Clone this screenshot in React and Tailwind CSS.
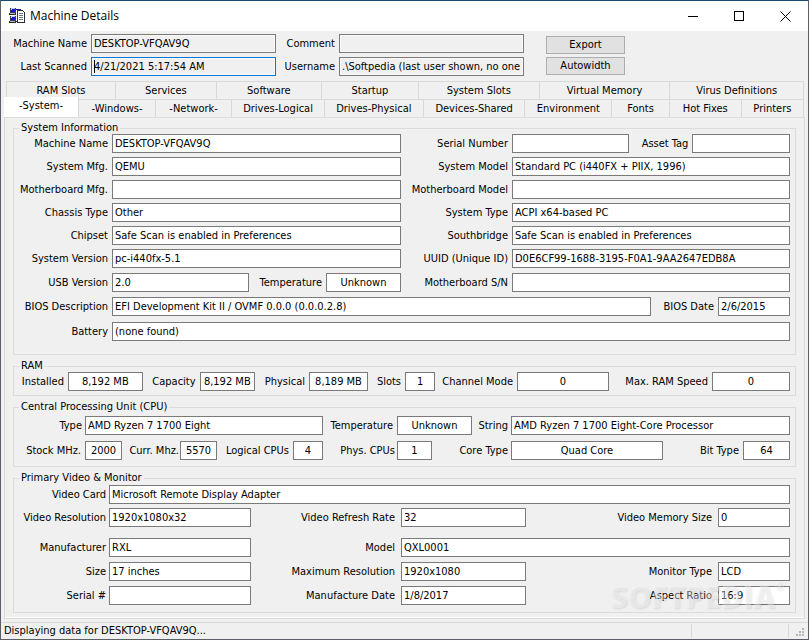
import React, { useId } from 'react';

const upperTabs = [
  ['RAM Slots', 'flex-109'],
  ['Services', 'flex-101'],
  ['Software', 'flex-105'],
  ['Startup', 'flex-97'],
  ['System Slots', 'flex-121'],
  ['Virtual Memory', 'flex-131'],
  ['Virus Definitions', 'flex-134'],
];

const lowerTabs = [
  ['-Windows-', 'flex-77'],
  ['-Network-', 'flex-76'],
  ['Drives-Logical', 'flex-93'],
  ['Drives-Physical', 'flex-99'],
  ['Devices-Shared', 'flex-102'],
  ['Environment', 'flex-87'],
  ['Fonts', 'flex-57'],
  ['Hot Fixes', 'flex-72'],
  ['Printers', 'flex-62'],
];

function Field({ label, value = '', labelWidth, width = 'flex-1', gap = 'pr-1', center = false }) {
  const id = useId();
  return (
    <>
      <label htmlFor={id} className={`shrink-0 text-right whitespace-nowrap ${gap} ${labelWidth}`}>
        {label}
      </label>
      <input
        id={id}
        readOnly
        defaultValue={value}
        className={`h-[19px] min-w-0 border border-[#7a7a7a] bg-white px-0.5 outline-none ${width} ${center ? 'text-center' : ''}`}
      />
    </>
  );
}

function Row({ children, className = '' }) {
  return <div className={`flex h-[19px] min-w-0 items-center ${className}`}>{children}</div>;
}

function Group({ title, className = '', children }) {
  return (
    <fieldset className={`min-w-0 border border-[#dcdcdc] pr-[5px] ${className}`}>
      <legend className="ml-[5px] h-3.5 px-0.5 leading-[14px]">{title}</legend>
      {children}
    </fieldset>
  );
}

function HeaderField({ label, value = '', labelWidth, focused = false }) {
  const id = useId();
  return (
    <div className="flex h-[19px] items-center">
      <label htmlFor={id} className={`shrink-0 pr-1 text-right whitespace-nowrap ${labelWidth}`}>
        {label}
      </label>
      <div className="relative w-[185px]">
        <input
          id={id}
          readOnly
          defaultValue={value}
          className={`block h-[19px] w-full border bg-[#f0f0f0] px-0.5 shadow-[inset_0_0_0_1px_#fafafa] outline-none ${focused ? 'border-[#0078d7]' : 'border-[#7a7a7a]'}`}
        />
        {focused && <span className="absolute top-[3px] left-[3px] h-[13px] w-px bg-black" />}
      </div>
    </div>
  );
}

function AppIcon() {
  return (
    <svg width="17" height="16" viewBox="0 0 17 16" shapeRendering="crispEdges" aria-hidden="true">
      <path d="M6 1h6v1H6zM6 13h3v1H6z" fill="#20208c" />
      <path d="M1 0h6v5H1zM1 8h6v5H1z" fill="#3c3c50" />
      <path d="M2 0h4v4H2zM2 8h4v4H2z" fill="#c4c8dc" />
      <path d="M2 1h4v3H2zM2 9h4v3H2z" fill="#1018d8" />
      <path d="M2 1h1v1H2zM2 9h1v1H2z" fill="#a8d8ff" />
      <path d="M0 5h7v2H0zM0 13h7v2H0z" fill="#2c2c2c" />
      <path d="M1 5h5v1H1zM1 13h5v1H1z" fill="#b8b8b8" />
      <path d="M8 2h6v1h1v1h1v11H8z" fill="#2c2c3c" />
      <path d="M9 3h5v1h1v10H9z" fill="#fff" />
      <path d="M10 5h4v1h-4zM10 7h4v1h-4zM10 9h4v1h-4zM10 11h4v1h-4z" fill="#707078" />
    </svg>
  );
}

function TitleBar() {
  return (
    <header className="flex h-[30px] items-center bg-white pl-2">
      <AppIcon />
      <h1 className="ml-1 font-['Open_Sans','Noto_Sans',sans-serif] text-xs">Machine Details</h1>
      <div className="ml-auto flex h-full">
        <button type="button" aria-label="Minimize" className="flex w-[46px] items-center justify-center">
          <svg width="10" height="11" shapeRendering="crispEdges">
            <path d="M0 5h10v1H0z" fill="#000" />
          </svg>
        </button>
        <button type="button" aria-label="Maximize" className="flex w-[46px] items-center justify-center">
          <svg width="10" height="10" shapeRendering="crispEdges">
            <path d="M.5 .5h9v9h-9z" stroke="#000" fill="none" />
          </svg>
        </button>
        <button type="button" aria-label="Close" className="flex w-[46px] items-center justify-center">
          <svg width="11" height="11">
            <path d="M.5 .5l10 10M10.500 .5l-10 10" stroke="#000" fill="none" />
          </svg>
        </button>
      </div>
    </header>
  );
}

function Tab({ name, size }) {
  return (
    <button
      type="button"
      role="tab"
      aria-selected="false"
      className={`h-[18px] min-w-0 border-t border-r border-[#d9d9d9] whitespace-nowrap ${size}`}
    >
      {name}
    </button>
  );
}

export default function App() {
  return (
    <div className="flex min-h-screen flex-col border border-[#5c6066] border-t-[#1b486d] bg-[#f0f0f0] font-['DejaVu_Sans_Condensed','Noto_Sans',sans-serif] text-[11px] leading-[14px] text-black">
      <TitleBar />

      <section className="flex items-start pt-[3px]">
        <div className="flex flex-col gap-1">
          <HeaderField label="Machine Name" value="DESKTOP-VFQAV9Q" labelWidth="w-[90px]" />
          <HeaderField label="Last Scanned" value="4/21/2021 5:17:54 AM" labelWidth="w-[90px]" focused />
        </div>
        <div className="flex flex-col gap-1">
          <HeaderField label="Comment" labelWidth="w-[63px]" />
          <HeaderField label="Username" value=".\Softpedia (last user shown, no one is logged in)" labelWidth="w-[63px]" />
        </div>
        <div className="mt-0.5 ml-[22px] flex flex-col gap-[3px]">
          <button type="button" className="h-[18px] w-[79px] border border-[#adadad] bg-[#e1e1e1]">Export</button>
          <button type="button" className="h-[18px] w-[79px] border border-[#adadad] bg-[#e1e1e1]">Autowidth</button>
        </div>
      </section>

      <nav role="tablist" className="mt-[5px] px-[3px]">
        <div className="mr-px ml-0.5 flex border-l border-[#d9d9d9]">
          {upperTabs.map(([name, size]) => (
            <Tab key={name} name={name} size={size} />
          ))}
        </div>
        <div className="mr-px flex items-end">
          <button
            type="button"
            role="tab"
            aria-selected="true"
            className="-mt-0.5 h-5 w-[75px] shrink-0 border-r border-[#d9d9d9] bg-white pb-0.5"
          >
            -System-
          </button>
          {lowerTabs.map(([name, size]) => (
            <Tab key={name} name={name} size={size} />
          ))}
        </div>
      </nav>

      <main className="mx-[3px] flex flex-col gap-1 border border-[#dcdcdc] px-2 pt-[3px] pb-[5px] shadow-[inset_0_-1px_0_#fff]">
        <Group title="System Information" className="pb-[13px]">
          <div className="-mt-px grid grid-cols-[minmax(0,387fr)_minmax(0,389fr)] gap-y-1">
            <Row><Field label="Machine Name" value="DESKTOP-VFQAV9Q" labelWidth="w-[98px]" /></Row>
            <Row>
              <Field label="Serial Number" labelWidth="w-[111px]" width="flex-118" />
              <Field label="Asset Tag" labelWidth="w-[63px]" width="flex-97" />
            </Row>
            <Row><Field label="System Mfg." value="QEMU" labelWidth="w-[98px]" /></Row>
            <Row><Field label="System Model" value="Standard PC (i440FX + PIIX, 1996)" labelWidth="w-[111px]" /></Row>
            <Row><Field label="Motherboard Mfg." labelWidth="w-[98px]" /></Row>
            <Row><Field label="Motherboard Model" labelWidth="w-[111px]" /></Row>
            <Row><Field label="Chassis Type" value="Other" labelWidth="w-[98px]" /></Row>
            <Row><Field label="System Type" value="ACPI x64-based PC" labelWidth="w-[111px]" /></Row>
            <Row><Field label="Chipset" value="Safe Scan is enabled in Preferences" labelWidth="w-[98px]" /></Row>
            <Row><Field label="Southbridge" value="Safe Scan is enabled in Preferences" labelWidth="w-[111px]" /></Row>
            <Row><Field label="System Version" value="pc-i440fx-5.1" labelWidth="w-[98px]" /></Row>
            <Row><Field label="UUID (Unique ID)" value="D0E6CF99-1688-3195-F0A1-9AA2647EDB8A" labelWidth="w-[111px]" /></Row>
          </div>
          <div className="mt-[5px] flex flex-col gap-[5px]">
            <div className="grid grid-cols-[minmax(0,387fr)_minmax(0,389fr)]">
              <Row>
                <Field label="USB Version" value="2.0" labelWidth="w-[98px]" width="flex-137" />
                <Field label="Temperature" value="Unknown" labelWidth="w-[77px]" width="w-[75px]" center />
              </Row>
              <Row><Field label="Motherboard S/N" labelWidth="w-[111px]" /></Row>
            </div>
            <Row>
              <Field label="BIOS Description" value="EFI Development Kit II / OVMF 0.0.0 (0.0.0.2.8)" labelWidth="w-[98px]" />
              <Field label="BIOS Date" value="2/6/2015" labelWidth="w-[67px]" width="w-[72px]" />
            </Row>
            <Row className="mt-px"><Field label="Battery" value="(none found)" labelWidth="w-[98px]" /></Row>
          </div>
        </Group>

        <Group title="RAM" className="pb-1">
          <Row className="-mt-px">
            <Field label="Installed" value="8,192 MB" labelWidth="w-[54px]" width="flex-75" center />
            <Field label="Capacity" value="8,192 MB" labelWidth="w-[57px]" width="flex-54" center />
            <Field label="Physical" value="8,189 MB" labelWidth="w-[54px]" width="flex-58" center />
            <Field label="Slots" value="1" labelWidth="w-[37px]" width="w-[30px]" center />
            <Field label="Channel Mode" value="0" labelWidth="w-[82px]" width="flex-94" center />
            <Field label="Max. RAM Speed" value="0" labelWidth="w-[103px]" width="w-[78px]" center />
          </Row>
        </Group>

        <Group title="Central Processing Unit (CPU)" className="pb-1.5">
          <div className="grid grid-cols-[minmax(0,309fr)_minmax(0,149fr)_minmax(0,318fr)] gap-y-1.5 pt-0.5">
            <Row><Field label="Type" value="AMD Ryzen 7 1700 Eight" labelWidth="w-[71px]" gap="pr-[3px]" /></Row>
            <Row><Field label="Temperature" value="Unknown" labelWidth="w-[74px]" center /></Row>
            <Row><Field label="String" value="AMD Ryzen 7 1700 Eight-Core Processor" labelWidth="w-[39px]" gap="pr-[3px]" /></Row>
            <Row>
              <Field label="Stock MHz." value="2000" labelWidth="w-[71px]" width="flex-37" center />
              <Field label="Curr. Mhz." value="5570" labelWidth="w-[58px]" width="flex-37" gap="pr-px" center />
              <Field label="Logical CPUs" value="4" labelWidth="w-[76px]" width="w-[30px]" center />
            </Row>
            <Row className="pr-10">
              <Field label="Phys. CPUs" value="1" labelWidth="w-[74px]" gap="pr-0.5" center />
            </Row>
            <Row>
              <Field label="Core Type" value="Quad Core" labelWidth="w-[39px] flex justify-end" gap="pr-[3px]" center />
              <Field label="Bit Type" value="64" labelWidth="w-20" width="w-[47px]" center />
            </Row>
          </div>
        </Group>

        <Group title="Primary Video & Monitor" className="pb-[7px]">
          <Row><Field label="Video Card" value="Microsoft Remote Display Adapter" labelWidth="w-[95px]" gap="pr-[3px]" /></Row>
          <div className="mt-1 grid grid-cols-[minmax(0,237fr)_minmax(0,275fr)_minmax(0,264fr)]">
            <Row><Field label="Video Resolution" value="1920x1080x32" labelWidth="w-[95px]" gap="pr-[3px]" /></Row>
            <Row><Field label="Video Refresh Rate" value="32" labelWidth="w-[150px]" gap="pr-1.5" /></Row>
            <Row><Field label="Video Memory Size" value="0" labelWidth="w-[192px]" gap="pr-1.5" /></Row>
          </div>
          <div className="mt-[11px] grid grid-cols-[minmax(0,237fr)_minmax(0,275fr)_minmax(0,264fr)] gap-y-[5px]">
            <Row><Field label="Manufacturer" value="RXL" labelWidth="w-[95px]" gap="pr-[3px]" /></Row>
            <Row className="col-span-2"><Field label="Model" value="QXL0001" labelWidth="w-[150px]" gap="pr-1.5" /></Row>
            <Row><Field label="Size" value="17 inches" labelWidth="w-[95px]" gap="pr-[3px]" /></Row>
            <Row><Field label="Maximum Resolution" value="1920x1080" labelWidth="w-[150px]" gap="pr-1.5" /></Row>
            <Row><Field label="Monitor Type" value="LCD" labelWidth="w-[192px]" gap="pr-1.5" /></Row>
            <Row><Field label="Serial #" labelWidth="w-[95px]" gap="pr-[3px]" /></Row>
            <Row><Field label="Manufacture Date" value="1/8/2017" labelWidth="w-[150px]" gap="pr-1.5" /></Row>
            <Row><Field label="Aspect Ratio" value="16:9" labelWidth="w-[192px]" gap="pr-1.5" /></Row>
          </div>
        </Group>
      </main>

      <footer className="relative mt-auto flex h-[17px] items-center border-t border-[#d9d9d9] pl-[3px]">
        <span>Displaying data for DESKTOP-VFQAV9Q...</span>
        <div className="mr-[3px] ml-auto flex h-3.5 w-[114px] items-end border-l border-[#d9d9d9]">
          <span className="h-3.5 w-[97px] border-r border-[#d9d9d9]" />
          <svg className="ml-auto" width="9" height="10" fill="#b8b8b8" shapeRendering="crispEdges" aria-hidden="true">
            <path d="M6 0h2v2H6zM3 3h2v2H3zM6 3h2v2H6zM0 6h2v2H0zM3 6h2v2H3zM6 6h2v2H6z" />
          </svg>
        </div>
        <div className="pointer-events-none absolute right-6 bottom-6 flex items-start font-['Open_Sans',sans-serif] text-[30px] leading-[36px] font-extrabold text-white/40 [text-shadow:1px_1px_2px_rgba(0,0,0,0.1)]">
          SOFTPEDIA
          <span className="text-[11px] leading-[14px]">®</span>
        </div>
      </footer>
    </div>
  );
}
